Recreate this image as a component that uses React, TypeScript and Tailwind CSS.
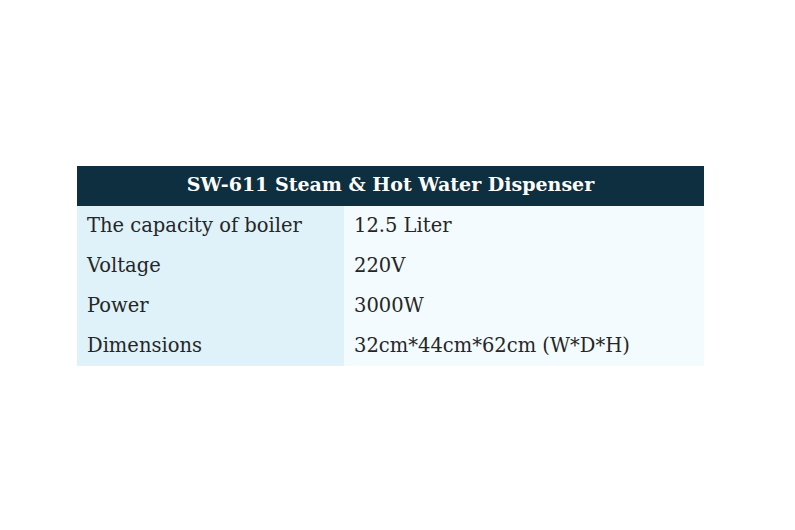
import React from "react";

const rows: [string, string][] = [
  ["The capacity of boiler", "12.5 Liter"],
  ["Voltage", "220V"],
  ["Power", "3000W"],
  ["Dimensions", "32cm*44cm*62cm (W*D*H)"],
];

export default function App() {
  return (
    <div className="w-[795px] h-[530px] bg-white pt-[166px] pl-[77px]" style={{ fontFamily: '"DejaVu Serif", serif' }}>
      <div className="w-[627px]">
        <div className="h-[40px] bg-[#0e2f40] text-white font-bold text-[19px] flex items-center justify-center pb-[3px]">
          SW-611 Steam &amp; Hot Water Dispenser
        </div>
        {rows.map(([k, v]) => (
          <div key={k} className="flex h-[40px] text-[19.5px] text-[#262626]">
            <div className="w-[267px] bg-[#dff1f9] flex items-center pl-[10px] pb-[1px]">{k}</div>
            <div className="flex-1 bg-[#f3fbfe] flex items-center pl-[10px] pb-[1px]">{v}</div>
          </div>
        ))}
      </div>
    </div>
  );
}
